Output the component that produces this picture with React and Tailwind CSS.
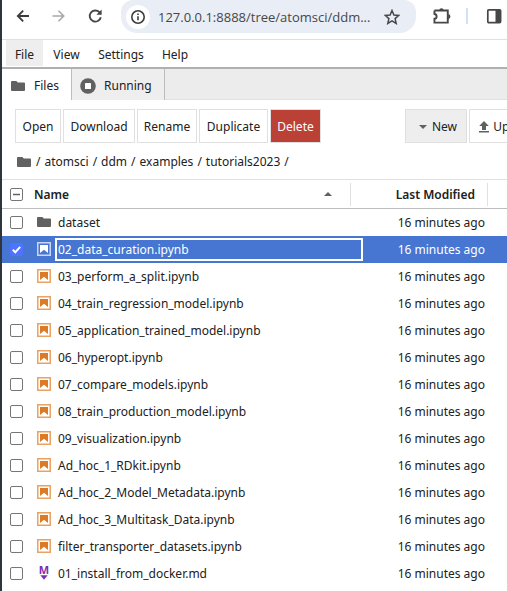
import React from "react";

const files = [
  { name: "dataset", kind: "folder" },
  { name: "02_data_curation.ipynb", kind: "notebook", selected: true },
  { name: "03_perform_a_split.ipynb", kind: "notebook" },
  { name: "04_train_regression_model.ipynb", kind: "notebook" },
  { name: "05_application_trained_model.ipynb", kind: "notebook" },
  { name: "06_hyperopt.ipynb", kind: "notebook" },
  { name: "07_compare_models.ipynb", kind: "notebook" },
  { name: "08_train_production_model.ipynb", kind: "notebook" },
  { name: "09_visualization.ipynb", kind: "notebook" },
  { name: "Ad_hoc_1_RDkit.ipynb", kind: "notebook" },
  { name: "Ad_hoc_2_Model_Metadata.ipynb", kind: "notebook" },
  { name: "Ad_hoc_3_Multitask_Data.ipynb", kind: "notebook" },
  { name: "filter_transporter_datasets.ipynb", kind: "notebook" },
  { name: "01_install_from_docker.md", kind: "markdown" },
];

const crumbs = ["atomsci", "ddm", "examples", "tutorials2023"];

function FolderIcon() {
  return (
    <svg className="h-4 w-4 shrink-0" viewBox="0 0 16 16" fill="#616161" aria-hidden="true">
      <path d="M2 3h4.4l1.4 1.5H14a1 1 0 0 1 1 1V12a1 1 0 0 1-1 1H2a1 1 0 0 1-1-1V4a1 1 0 0 1 1-1z" />
    </svg>
  );
}

function NotebookIcon({ light }) {
  const main = light ? "#ffffff" : "#dd7a25";
  const edge = light ? "#c8d6f4" : "#eaa263";
  return (
    <svg className="h-4 w-4 shrink-0" viewBox="0 0 16 16" aria-hidden="true">
      <rect x="1.75" y="1.75" width="12.5" height="12.5" fill="none" stroke={edge} strokeWidth="1.5" />
      <path d="M4 4h8v8L8 8.7 4 12z" fill={main} />
    </svg>
  );
}

function MarkdownIcon() {
  return (
    <svg className="h-4 w-4 shrink-0 overflow-visible" viewBox="0 0 16 16" fill="#7b2fb0" aria-hidden="true">
      <text x="8" y="9" textAnchor="middle" className="font-['Open_Sans'] text-[11px] font-bold">M</text>
      <path d="M4.3 10.3h7.4L8 14.8z" />
    </svg>
  );
}

function FileIcon({ kind, light }) {
  if (kind === "folder") return <FolderIcon />;
  if (kind === "markdown") return <MarkdownIcon />;
  return <NotebookIcon light={light} />;
}

function Checkbox({ label, checked = false, mixed = false }) {
  return (
    <label className="relative block h-[13px] w-[13px] shrink-0">
      <input
        type="checkbox"
        aria-label={label}
        defaultChecked={checked}
        ref={(el) => {
          if (el) el.indeterminate = mixed;
        }}
        className="block h-[13px] w-[13px] appearance-none rounded-xs border border-[#767676] bg-white checked:border-[#4d73ff] checked:bg-[#4d73ff]"
      />
      {(checked || mixed) && (
        <svg className="pointer-events-none absolute inset-0" viewBox="0 0 13 13" fill="none" aria-hidden="true">
          {mixed ? (
            <path d="M3 6.5h7" stroke="#616161" strokeWidth="1.5" />
          ) : (
            <path d="M2.8 6.7l2.5 2.5 4.9-5.4" stroke="#fff" strokeWidth="2" />
          )}
        </svg>
      )}
    </label>
  );
}

function BrowserBar() {
  return (
    <header className="flex h-10 items-start border-b border-[#e0e0e0] pl-[13px] text-[#474747]">
      <div className="flex h-8 items-center gap-5">
        <button aria-label="Back">
          <svg className="h-4 w-4" viewBox="0 0 16 16" fill="none" stroke="#3c3c3c" strokeWidth="1.8">
            <path d="M14 8H3M8.2 2.6L2.8 8l5.4 5.4" />
          </svg>
        </button>
        <button aria-label="Forward">
          <svg className="h-4 w-4" viewBox="0 0 16 16" fill="none" stroke="#a8a8a8" strokeWidth="1.6">
            <path d="M1.5 8h11M7.5 2.8L12.7 8l-5.2 5.2" />
          </svg>
        </button>
        <button aria-label="Reload">
          <svg className="h-4 w-4" viewBox="0 0 16 16" fill="none" stroke="#474747" strokeWidth="1.9">
            <path d="M13.8 9.2A5.6 5.6 0 1 1 12.4 4.2l1.4 1.6" />
            <path d="M14.6 1.5v5.2H9.4z" fill="#474747" stroke="none" />
          </svg>
        </button>
      </div>
      <div className="ml-[18px] flex h-[33px] flex-1 items-center rounded-b-2xl rounded-t-xl bg-[#e9edf6] pl-[5px]">
        <button aria-label="Site information" className="flex h-6 w-6 items-center justify-center rounded-full bg-white">
          <svg className="h-4 w-4" viewBox="0 0 16 16" fill="none" stroke="#3c3c3c" strokeWidth="1.6">
            <circle cx="8" cy="8" r="6.2" />
            <path d="M8 7.2v4M8 4.4v1.7" />
          </svg>
        </button>
        <input
          aria-label="Address"
          readOnly
          value="127.0.0.1:8888/tree/atomsci/ddm..."
          className="ml-2 min-w-0 flex-1 bg-transparent font-['Open_Sans',sans-serif] text-[13px] text-[#474747] outline-none"
        />
        <button aria-label="Bookmark" className="mr-4">
          <svg className="h-4 w-4" viewBox="0 0 16 16" fill="none" stroke="#474747" strokeWidth="1.5">
            <path d="M8 1.5l1.9 4.5 4.9.4-3.7 3.2 1.1 4.8L8 11.9l-4.2 2.5 1.1-4.8-3.7-3.2 4.9-.4z" />
          </svg>
        </button>
      </div>
      <div className="flex h-8 shrink-0 items-center pl-4">
        <button aria-label="Extensions">
          <svg className="h-5 w-5" viewBox="0 0 18 18" fill="none" stroke="#474747" strokeWidth="1.7">
            <path d="M2.2 4h12v3.3M2.2 4v3.2c2.6.2 2.6 4.1 0 4.3V15h12v-4" />
            <path d="M14.2 7v5" />
            <path d="M6.5 4a2 2 0 0 1 4 0zM14.6 7.4a2 2 0 0 1 0 4z" fill="#474747" stroke="none" />
          </svg>
        </button>
        <span className="ml-[14px] h-4 w-0.5 bg-[#d3e0fb]" />
        <button aria-label="Side panel" className="ml-[18px] mr-[5px]">
          <svg className="h-4 w-4" viewBox="0 0 16 16" fill="none" stroke="#474747" strokeWidth="1.7">
            <rect x="1.8" y="1.8" width="12.8" height="12.8" rx="1" />
            <path d="M9.5 1.8h5v12.8h-5z" fill="#474747" stroke="none" />
          </svg>
        </button>
      </div>
    </header>
  );
}

function ToolButton({ children, className = "" }) {
  return (
    <button className={`flex h-[34px] shrink-0 items-center justify-center border border-[#e0e0e0] pt-0.5 ${className}`}>
      {children}
    </button>
  );
}

export default function App() {
  return (
    <div className="min-h-screen overflow-hidden border-l-2 border-[#30343c] bg-white font-['Noto_Sans','Open_Sans',sans-serif] text-xs leading-5 whitespace-nowrap text-[#212121]">
      <BrowserBar />

      <nav className="flex h-[27px] pl-1 pb-px">
        <button className="w-[37px] bg-[#eeeeee] pt-1">File</button>
        <button className="w-[47px] pt-1">View</button>
        <button className="w-[62px] pt-1">Settings</button>
        <button className="w-[46px] pt-1">Help</button>
      </nav>

      <div role="tablist" className="flex h-[33px] border-t-2 border-[#b0b0b0] bg-[#ececec]">
        <button role="tab" aria-selected="true" className="flex w-[70px] items-center gap-2 border-r border-[#bdbdbd] bg-white pt-0.5 pl-2">
          <FolderIcon />
          Files
        </button>
        <button role="tab" aria-selected="false" className="flex w-[93px] items-center gap-2 border-r border-[#bdbdbd] bg-[#eeeeee] pt-0.5 pl-2">
          <svg className="h-4 w-4" viewBox="0 0 16 16" aria-hidden="true">
            <circle cx="8" cy="8" r="7.8" fill="#616161" />
            <rect x="5" y="5" width="6" height="6" rx="0.5" fill="#fff" />
          </svg>
          Running
        </button>
        <span className="flex-1 border-b border-[#e0e0e0]" />
      </div>

      <main>
        <div className="flex pt-[9px] pl-[13px]">
          <div className="flex flex-1 gap-0.5">
            <ToolButton className="w-[46px]">Open</ToolButton>
            <ToolButton className="w-[72px]">Download</ToolButton>
            <ToolButton className="w-[60px]">Rename</ToolButton>
            <ToolButton className="w-[69px]">Duplicate</ToolButton>
            <ToolButton className="w-[51px] bg-[#bb4136] text-white">Delete</ToolButton>
          </div>
          <div className="flex w-[102px] shrink-0 gap-0.5">
            <ToolButton className="w-[62px] gap-[5px] bg-[#eeeeee] pl-1">
              <svg className="h-1 w-2" viewBox="0 0 8 4" fill="#616161" aria-hidden="true">
                <path d="M0 0h8L4 4z" />
              </svg>
              New
            </ToolButton>
            <ToolButton className="w-[74px] gap-[3px]">
              <svg className="h-3 w-3" viewBox="0 0 12 12" fill="#616161" aria-hidden="true">
                <path d="M6 0l4.8 5H8v4H4V5H1.2zM1 10h10v1.6H1z" />
              </svg>
              Upload
            </ToolButton>
          </div>
        </div>

        <nav aria-label="Breadcrumb" className="flex h-9 items-center gap-1 pt-0.5 pl-[14px]">
          <FolderIcon />
          <span>/</span>
          {crumbs.map((crumb) => (
            <React.Fragment key={crumb}>
              <a href="#">{crumb}</a>
              <span>/</span>
            </React.Fragment>
          ))}
        </nav>

        <table className="w-full table-fixed border-collapse text-left">
          <colgroup>
            <col />
            <col className="w-[137px]" />
            <col className="w-[19px]" />
          </colgroup>
          <thead>
            <tr className="h-[29px] border-t border-b border-t-[#e0e0e0] border-b-[#bdbdbd]">
              <th className="p-0 font-semibold">
                <div className="flex h-[23px] items-center border-r border-[#e0e0e0] pr-[18px] pl-2">
                  <Checkbox label="Select all files" mixed />
                  <span className="ml-[11px] flex-1 pt-px">Name</span>
                  <svg className="h-1 w-2" viewBox="0 0 8 4" fill="#616161" aria-hidden="true">
                    <path d="M0 4h8L4 0z" />
                  </svg>
                </div>
              </th>
              <th className="p-0 font-semibold">
                <div className="flex h-[23px] items-center justify-end border-r border-[#e0e0e0] pt-0.5 pr-3">Last Modified</div>
              </th>
              <th className="p-0" />
            </tr>
          </thead>
          <tbody>
            {files.map((file) => (
              <tr key={file.name} className={`h-[27px] ${file.selected ? "bg-[#4676d2] text-white" : ""}`}>
                <td className="p-0">
                  <div className="flex items-center pl-2">
                    <Checkbox label={`Select ${file.name}`} checked={file.selected} />
                    <span className="ml-[13px]">
                      <FileIcon kind={file.kind} light={file.selected} />
                    </span>
                    <a
                      href="#"
                      className={`ml-[3px] h-[23px] border-2 pl-px ${file.selected ? "-mr-3 flex-1 border-white" : "border-transparent"}`}
                    >
                      {file.name}
                    </a>
                  </div>
                </td>
                <td className="p-0 pt-0.5 pr-[3px] text-right">16 minutes ago</td>
                <td className="p-0" />
              </tr>
            ))}
          </tbody>
        </table>
      </main>
    </div>
  );
}
